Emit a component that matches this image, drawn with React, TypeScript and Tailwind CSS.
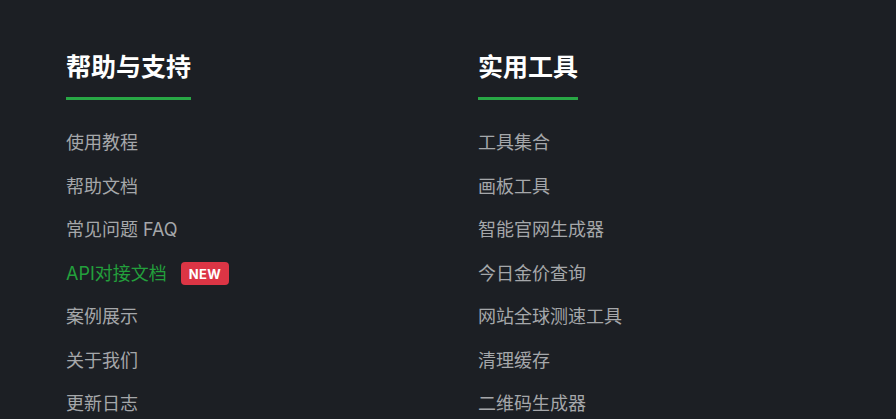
const helpLinks = ["使用教程", "帮助文档", "常见问题 FAQ", "API对接文档", "案例展示", "关于我们", "更新日志"];
const toolLinks = ["工具集合", "画板工具", "智能官网生成器", "今日金价查询", "网站全球测速工具", "清理缓存", "二维码生成器"];

const Column = ({ title, links }: { title: string; links: string[] }) => (
  <div>
    <h3 className="inline-block text-[25px] leading-8 font-bold text-white pt-px pb-[14px] border-b-[3px] border-[#28a745]">
      {title}
    </h3>
    <ul className="mt-[29px] flex flex-col gap-[15.5px]">
      {links.map((link) =>
        link === "API对接文档" ? (
          <li key={link} className="flex items-center leading-[28px]">
            <span className="text-[18px] text-[#23a03c]">{link}</span>
            <span className="ml-[14px] h-[23px] px-[8px] rounded-[4px] bg-[#dc3545] text-white text-[13px] font-bold flex items-center tracking-wide">
              NEW
            </span>
          </li>
        ) : (
          <li key={link} className="text-[18px] leading-[28px] text-[#a5a7aa]">
            {link}
          </li>
        )
      )}
    </ul>
  </div>
);

export default function App() {
  return (
    <footer
      className="w-[896px] h-[419px] overflow-hidden bg-[#1c1f24] pt-[50px] pl-[66px]"
      style={{ fontFamily: 'Inter, "Noto Sans CJK SC", sans-serif' }}
    >
      <div className="grid grid-cols-[412px_1fr]">
        <Column title="帮助与支持" links={helpLinks} />
        <Column title="实用工具" links={toolLinks} />
      </div>
    </footer>
  );
}
